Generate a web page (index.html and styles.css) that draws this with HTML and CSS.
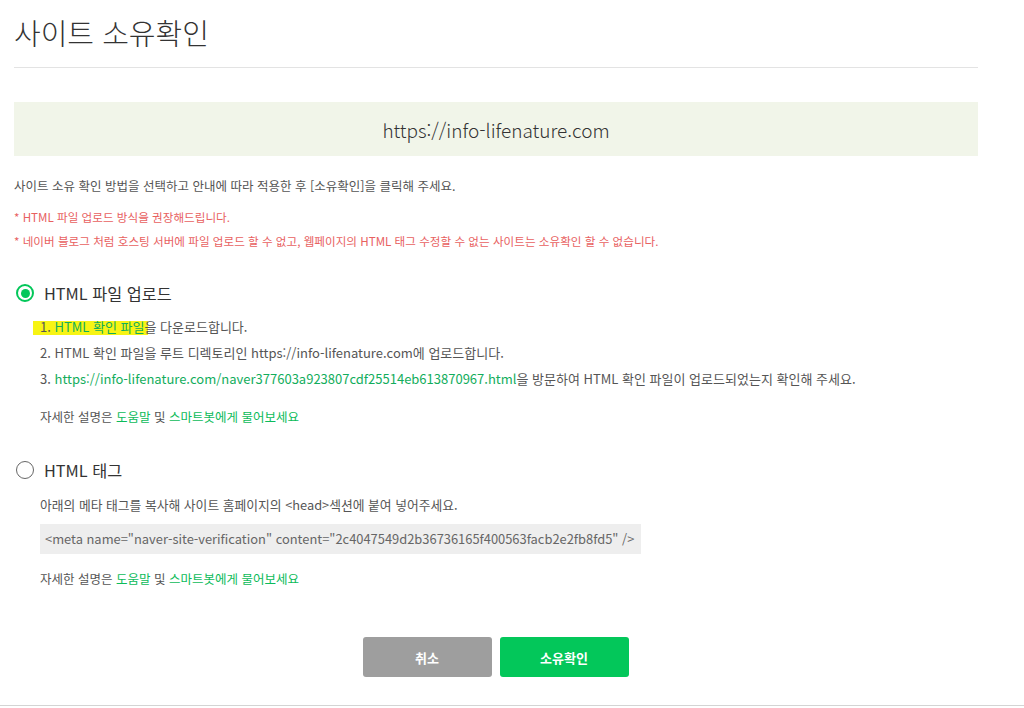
FILE: index.html
```html
<!DOCTYPE html>
<html lang="ko">
<head>
    <meta charset="UTF-8">
    <meta name="viewport" content="width=device-width, initial-scale=1.0">
    <title>사이트 소유확인</title>
    <link rel="stylesheet" href="styles.css">
</head>
<body>
    <div class="page">
        <!-- Header -->
        <div class="page-header">
            <h1>사이트 소유확인</h1>
        </div>

        <div class="site-box">https://info-lifenature.com</div>

        <p class="guide">사이트 소유 확인 방법을 선택하고 안내에 따라 적용한 후 [소유확인]을 클릭해 주세요.</p>
        <ul class="notice">
            <li>* HTML 파일 업로드 방식을 권장해드립니다.</li>
            <li>* 네이버 블로그 처럼 호스팅 서버에 파일 업로드 할 수 없고, 웹페이지의 HTML 태그 수정할 수 없는 사이트는 소유확인 할 수 없습니다.</li>
        </ul>

        <!-- HTML file upload -->
        <div class="method">
            <label class="radio-row">
                <span class="radio checked"></span>
                <span class="radio-label">HTML 파일 업로드</span>
            </label>
            <ol class="steps">
                <li><span class="mark">1. <a href="#">HTML 확인 파일</a></span>을 다운로드합니다.</li>
                <li>2. HTML 확인 파일을 루트 디렉토리인 https://info-lifenature.com에 업로드합니다.</li>
                <li>3. <a href="#">https://info-lifenature.com/naver377603a923807cdf25514eb613870967.html</a>을 방문하여 HTML 확인 파일이 업로드되었는지 확인해 주세요.</li>
            </ol>
            <p class="help">자세한 설명은 <a href="#">도움말</a> 및 <a href="#">스마트봇에게 물어보세요</a></p>
        </div>

        <!-- HTML tag -->
        <div class="method">
            <label class="radio-row">
                <span class="radio"></span>
                <span class="radio-label">HTML 태그</span>
            </label>
            <p class="desc">아래의 메타 태그를 복사해 사이트 홈페이지의 &lt;head&gt;섹션에 붙여 넣어주세요.</p>
            <div class="code">&lt;meta name="naver-site-verification" content="2c4047549d2b36736165f400563facb2e2fb8fd5" /&gt;</div>
            <p class="help">자세한 설명은 <a href="#">도움말</a> 및 <a href="#">스마트봇에게 물어보세요</a></p>
        </div>
    </div>

    <div class="buttons">
        <button type="button" class="btn btn-cancel">취소</button>
        <button type="button" class="btn btn-ok">소유확인</button>
    </div>
</body>
</html>
```

FILE: styles.css
```css
* {
    margin: 0;
    padding: 0;
    box-sizing: border-box;
}

body {
    font-family: "Noto Sans CJK KR", "Noto Sans", sans-serif;
    background-color: #fff;
    color: #555;
    width: 1024px;
    height: 708px;
    overflow: hidden;
}

a {
    text-decoration: none;
}

.page {
    width: 978px;
    padding-left: 14px;
}

.page-header {
    padding-top: 12px;
    padding-bottom: 15px;
    border-bottom: 1px solid #e3e3e3;
}

.page-header h1 {
    font-size: 29px;
    font-weight: 300;
    line-height: 40px;
    color: #333;
}

.site-box {
    margin-top: 34px;
    height: 54px;
    background-color: #f1f5e9;
    display: flex;
    align-items: center;
    justify-content: center;
    font-size: 19px;
    font-weight: 300;
    color: #333;
}

.guide {
    margin-top: 21px;
    font-size: 12.5px;
    line-height: 18px;
    color: #555;
}

.notice {
    list-style: none;
    margin-top: 10px;
    font-size: 11.6px;
    line-height: 24px;
    color: #e8615f;
}

.method {
    margin-top: 28px;
}

.radio-row {
    display: flex;
    align-items: center;
    height: 24px;
    padding-left: 2px;
}

.radio {
    width: 18px;
    height: 18px;
    border-radius: 50%;
    border: 1.5px solid #666;
    display: flex;
    align-items: center;
    justify-content: center;
}

.radio.checked {
    border: 2px solid #03c75a;
}

.radio.checked::after {
    content: "";
    width: 9px;
    height: 9px;
    border-radius: 50%;
    background-color: #03c75a;
}

.radio-label {
    margin-left: 10px;
    font-size: 16.3px;
    color: #333;
}

.steps {
    list-style: none;
    margin-top: 9px;
    padding-left: 26px;
    font-size: 13px;
    line-height: 26px;
    color: #555;
}

.steps a {
    color: #12ad5c;
}

.mark {
    background: linear-gradient(to bottom, transparent 22%, #f7f414 22%, #f7f414 96%, transparent 96%);
    margin-left: -7px;
    padding-left: 7px;
    padding-right: 4px;
    margin-right: -4px;
}

.help {
    margin-top: 12px;
    padding-left: 26px;
    font-size: 12.5px;
    line-height: 26px;
    color: #555;
}

.help a {
    color: #0cbb5a;
}

.desc {
    margin-top: 10px;
    padding-left: 26px;
    font-size: 12.8px;
    line-height: 26px;
    color: #555;
}

.code {
    margin-top: 6px;
    margin-left: 26px;
    width: 601px;
    height: 30px;
    padding-left: 5px;
    background-color: #eeeeee;
    font-size: 12.9px;
    line-height: 30px;
    color: #666;
}

.buttons {
    margin-top: 45px;
    height: 69px;
    display: flex;
    justify-content: center;
    align-items: flex-start;
    gap: 8px;
    padding-right: 33px;
    border-bottom: 1px solid #d4d4d4;
}

.btn {
    width: 129px;
    height: 40px;
    border: none;
    border-radius: 3px;
    font-family: inherit;
    font-size: 13px;
    font-weight: 700;
    color: #fff;
    cursor: pointer;
}

.btn-cancel {
    background-color: #9e9e9e;
}

.btn-ok {
    background-color: #03c75a;
}
```
